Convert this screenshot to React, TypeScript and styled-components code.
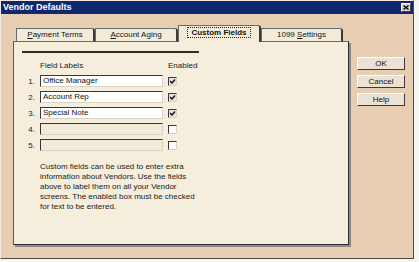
import React from 'react';
import styled, { createGlobalStyle } from 'styled-components';

const Global = createGlobalStyle`
  html, body { margin: 0; padding: 0; background: #f7f5f2; }
  body { font-family: "Liberation Sans", Arial, sans-serif; }
`;

const Window = styled.div`
  width: 414px;
  height: 259px;
  box-sizing: border-box;
  border-left: 1px solid #f3ebe2;
  border-top: 1px solid #f3ebe2;
  border-right: 1px solid #4a4a4a;
  border-bottom: 1px solid #4a4a4a;
  background: #e7cdb1;
  display: flex;
  flex-direction: column;
`;

const TitleBar = styled.div`
  height: 13px;
  background: #0f2670;
  display: flex;
  align-items: center;
  justify-content: space-between;
  padding: 0 2px 0 2px;
`;

const Title = styled.span`
  color: #fff;
  font-weight: bold;
  font-size: 9px;
  line-height: 13px;
`;

const CloseBtn = styled.div`
  width: 10px;
  height: 9px;
  box-sizing: border-box;
  background: #d8d2c8;
  border-top: 1px solid #fff;
  border-left: 1px solid #fff;
  border-right: 1px solid #404040;
  border-bottom: 1px solid #404040;
  display: flex;
  align-items: center;
  justify-content: center;
`;

const Body = styled.div`
  flex: 1;
  display: flex;
  padding: 11px 0 0 12px;
  gap: 5px;
`;

const LeftCol = styled.div`
  display: flex;
  flex-direction: column;
  width: 339px;
`;

const TabRow = styled.div`
  display: flex;
  align-items: flex-end;
  height: 17px;
  padding-left: 3px;
  position: relative;
  z-index: 1;
  margin-bottom: -1px;
`;

const Tab = styled.div<{ $w: number; $active?: boolean }>`
  width: ${p => p.$w}px;
  height: ${p => (p.$active ? 17 : 14)}px;
  box-sizing: border-box;
  background: #f4ecdb;
  border-left: 1px solid #6d6a66;
  border-top: 1px solid #6d6a66;
  border-right: 2px solid #3c3a38;
  border-top-right-radius: 3px;
  display: flex;
  align-items: center;
  justify-content: center;
  font-size: 8px;
  color: #111;
  font-weight: ${p => (p.$active ? 'bold' : 'normal')};
  padding-bottom: ${p => (p.$active ? 3 : 1)}px;
  ${p => (p.$active ? '' : 'border-bottom: 1px solid #6d6a66;')}
`;

const Focus = styled.span`
  border: 1px dotted #222;
  padding: 0 3px;
  line-height: 9px;
`;

const Panel = styled.div`
  width: 336px;
  height: 204px;
  box-sizing: border-box;
  background: #f5eedc;
  border-left: 1px solid #5e5b57;
  border-top: 1px solid #6d6a66;
  border-right: 1px solid #2e2e2e;
  border-bottom: 1px solid #2e2e2e;
  box-shadow: 2px 2px 0 #8a8784;
  padding: 9px 0 0 8px;
  display: flex;
  flex-direction: column;
`;

const Rule = styled.div`
  width: 177px;
  height: 0;
  border-top: 2px solid #2f2d2a;
`;

const Header = styled.div`
  display: flex;
  margin-top: 7px;
  font-size: 8px;
  line-height: 11px;
  color: #222;
`;

const HeadLabel = styled.span<{ $w: number }>`
  width: ${p => p.$w}px;
  padding-left: 18px;
  box-sizing: border-box;
`;

const Rows = styled.div`
  display: flex;
  flex-direction: column;
  gap: 4px;
  margin-top: 4px;
`;

const Row = styled.div`
  display: flex;
  align-items: center;
  height: 12px;
`;

const Num = styled.span`
  width: 18px;
  text-align: right;
  font-size: 8px;
  color: #222;
  padding-right: 5px;
  box-sizing: border-box;
`;

const Field = styled.div<{ $disabled?: boolean }>`
  width: 123px;
  height: 12px;
  box-sizing: border-box;
  background: ${p => (p.$disabled ? '#f1ead8' : '#ffffff')};
  border-top: 1px solid #3a3836;
  border-left: 1px solid #3a3836;
  border-right: 1px solid #d8d2c4;
  border-bottom: 1px solid #d8d2c4;
  font-size: 8px;
  line-height: 10px;
  padding-left: 2px;
  color: #111;
  white-space: nowrap;
`;

const Check = styled.div<{ $checked?: boolean }>`
  margin-left: 5px;
  width: 9px;
  height: 9px;
  box-sizing: border-box;
  background: ${p => (p.$checked ? '#e4e0da' : '#ffffff')};
  border-top: 1px solid #3a3836;
  border-left: 1px solid #3a3836;
  border-right: 1px solid #d8d2c4;
  border-bottom: 1px solid #d8d2c4;
  display: flex;
  align-items: center;
  justify-content: center;
`;

const Desc = styled.div`
  margin-top: 11px;
  padding-left: 18px;
  font-size: 8px;
  line-height: 10px;
  color: #1a1a1a;
`;

const BtnCol = styled.div`
  display: flex;
  flex-direction: column;
  gap: 5px;
  padding-top: 32px;
`;

const Button = styled.div`
  width: 48px;
  height: 13px;
  box-sizing: border-box;
  background: #ebe2d5;
  border-top: 1px solid #ffffff;
  border-left: 1px solid #ffffff;
  border-right: 1px solid #3c3a38;
  border-bottom: 1px solid #3c3a38;
  font-size: 8px;
  display: flex;
  align-items: center;
  justify-content: center;
  color: #111;
`;

const U = styled.span`
  text-decoration: underline;
`;

const CheckMark = () => (
  <svg width="7" height="7" viewBox="0 0 7 7">
    <path d="M1 3 L3 5 L6 1.5" stroke="#111" strokeWidth="1.4" fill="none" />
  </svg>
);

const rows = [
  { n: 1, v: 'Office Manager', c: true },
  { n: 2, v: 'Account Rep', c: true },
  { n: 3, v: 'Special Note', c: true },
  { n: 4, v: '', c: false },
  { n: 5, v: '', c: false },
];

export default function App() {
  return (
    <>
      <Global />
      <Window>
        <TitleBar>
          <Title>Vendor Defaults</Title>
          <CloseBtn>
            <svg width="6" height="5" viewBox="0 0 6 5">
              <path d="M0.5 0.5 L5.5 4.5 M5.5 0.5 L0.5 4.5" stroke="#000" strokeWidth="1.3" />
            </svg>
          </CloseBtn>
        </TitleBar>
        <Body>
          <LeftCol>
            <TabRow>
              <Tab $w={79}><span><U>P</U>ayment Terms</span></Tab>
              <Tab $w={83}><span><U>A</U>ccount Aging</span></Tab>
              <Tab $w={83} $active><Focus>Custom Fields</Focus></Tab>
              <Tab $w={82}><span>1099 <U>S</U>ettings</span></Tab>
            </TabRow>
            <Panel>
              <Rule />
              <Header>
                <HeadLabel $w={146}>Field Labels</HeadLabel>
                <span>Enabled</span>
              </Header>
              <Rows>
                {rows.map(r => (
                  <Row key={r.n}>
                    <Num>{r.n}.</Num>
                    <Field $disabled={!r.c}>{r.v}</Field>
                    <Check $checked={r.c}>{r.c && <CheckMark />}</Check>
                  </Row>
                ))}
              </Rows>
              <Desc>
                Custom fields can be used to enter extra<br />
                information about Vendors. Use the fields<br />
                above to label them on all your Vendor<br />
                screens. The enabled box must be checked<br />
                for text to be entered.
              </Desc>
            </Panel>
          </LeftCol>
          <BtnCol>
            <Button>OK</Button>
            <Button>Cancel</Button>
            <Button>Help</Button>
          </BtnCol>
        </Body>
      </Window>
    </>
  );
}
